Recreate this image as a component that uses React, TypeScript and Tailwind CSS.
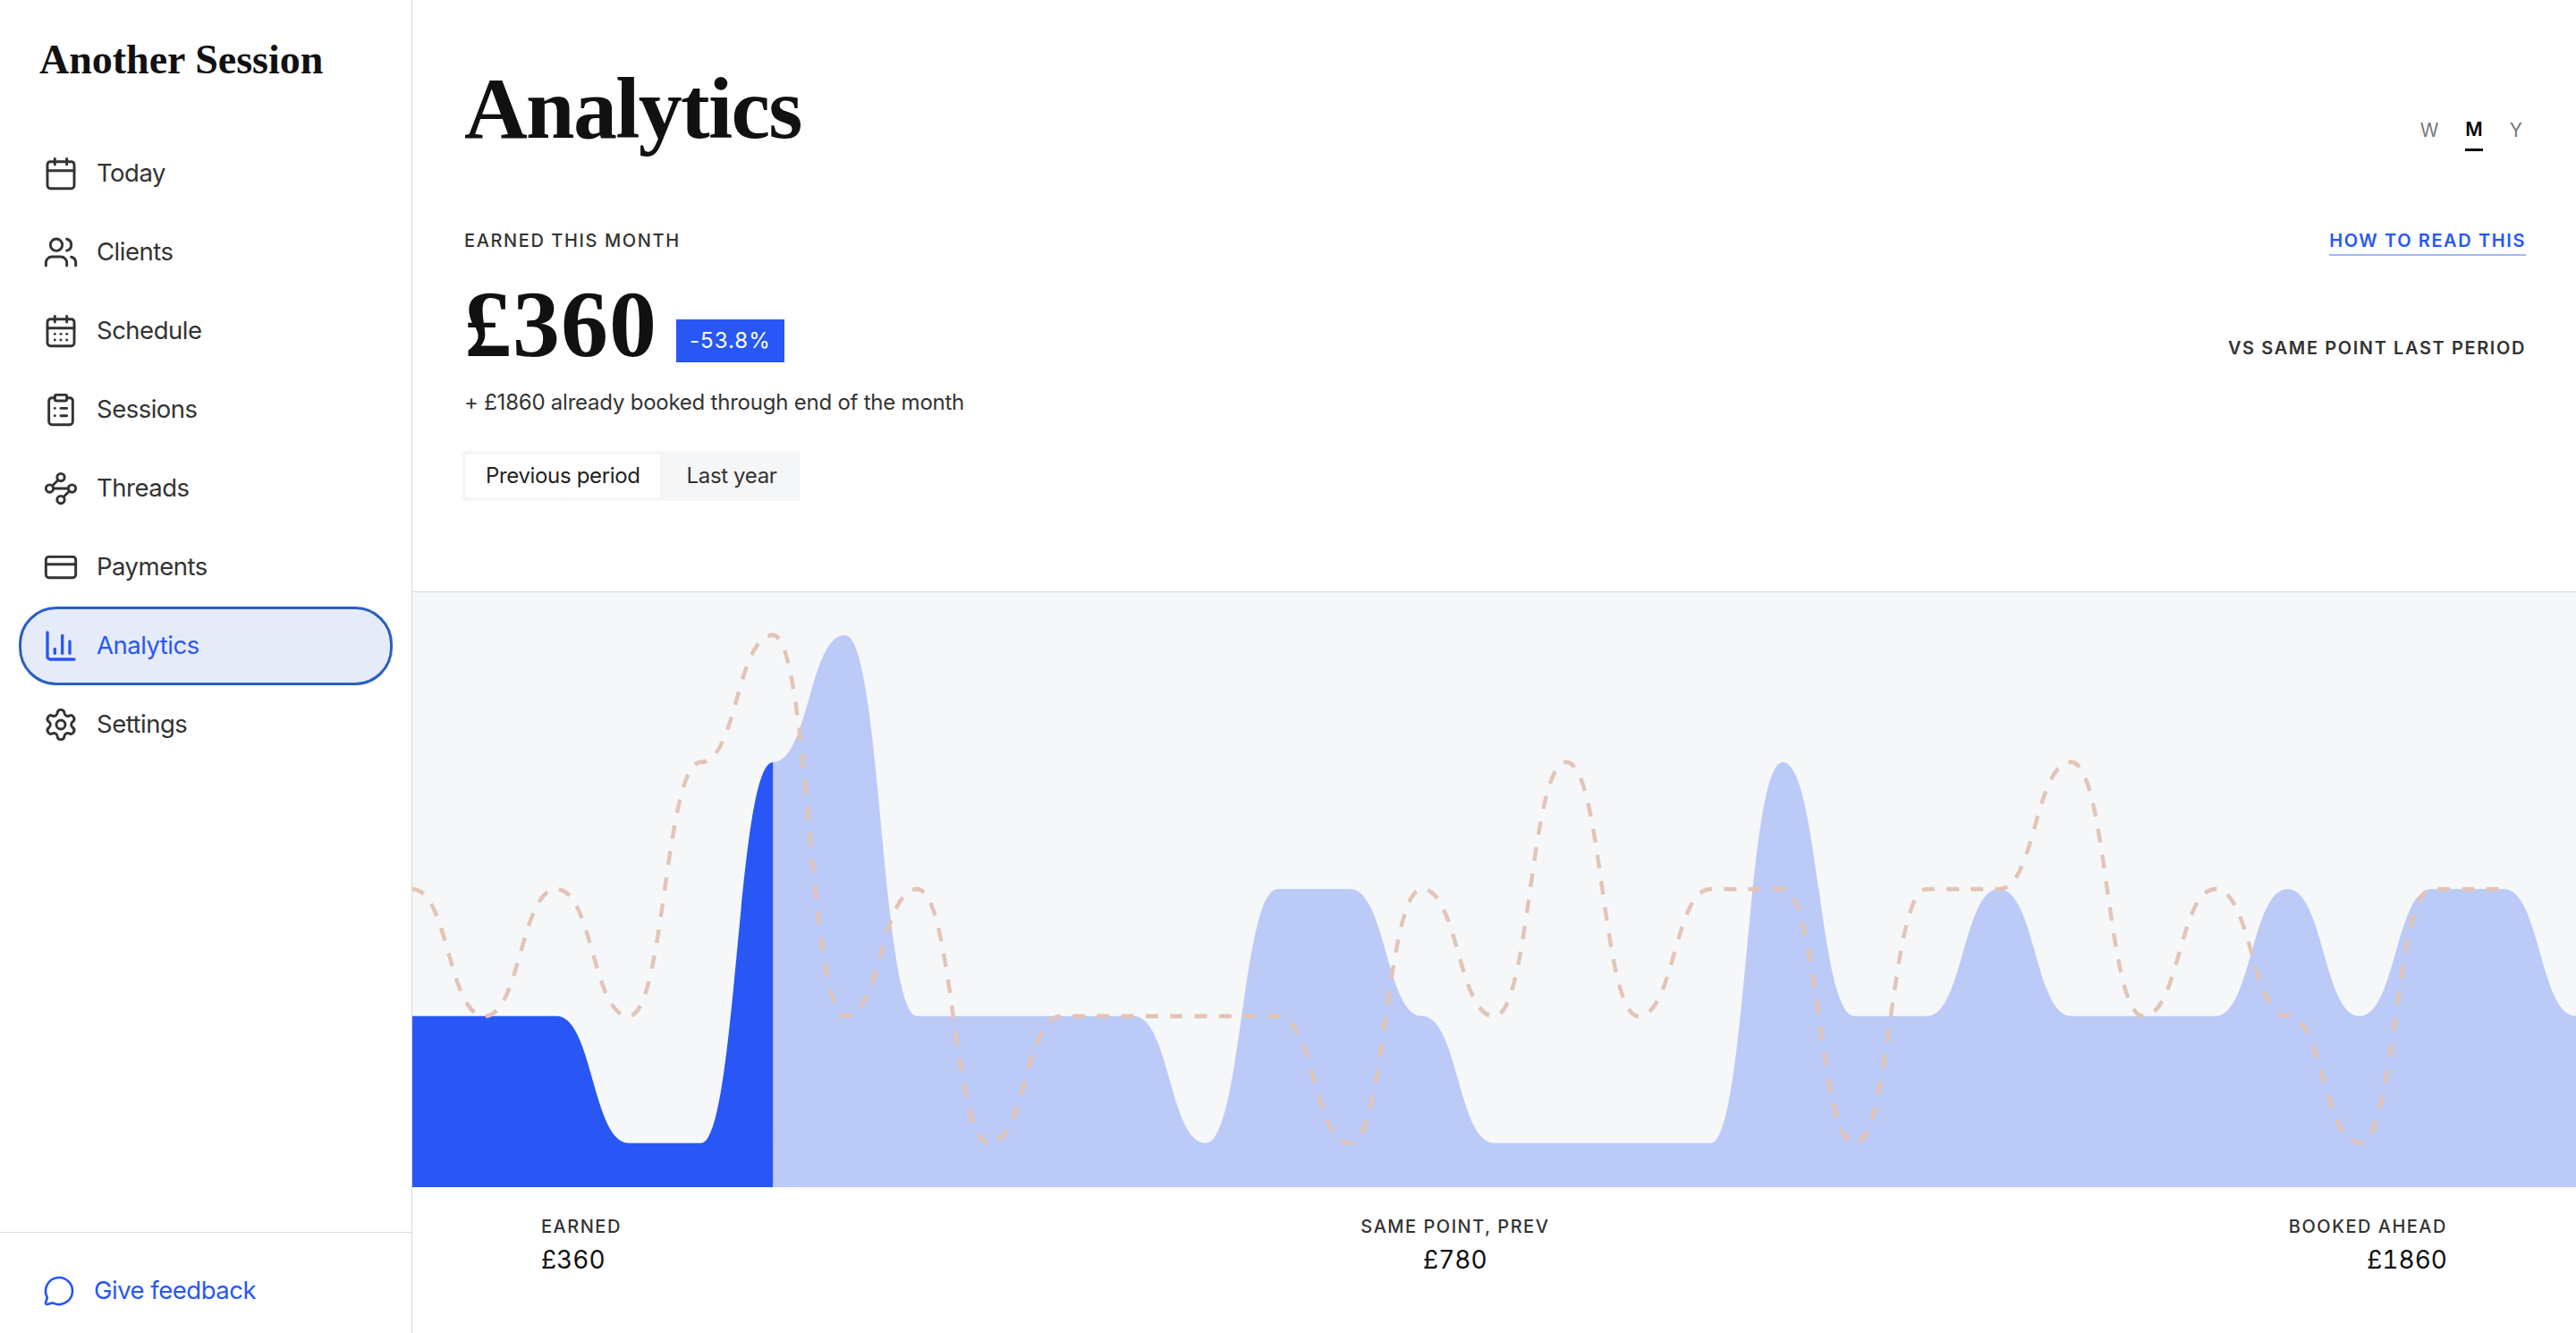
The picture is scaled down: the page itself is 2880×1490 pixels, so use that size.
import { Calendar, Users, CalendarDays, ClipboardList, Waypoints, CreditCard, ChartColumn, Settings, MessageCircle } from 'lucide-react';

const navItems = [
  { label: 'Today', icon: Calendar },
  { label: 'Clients', icon: Users },
  { label: 'Schedule', icon: CalendarDays },
  { label: 'Sessions', icon: ClipboardList },
  { label: 'Threads', icon: Waypoints },
  { label: 'Payments', icon: CreditCard },
  { label: 'Analytics', icon: ChartColumn, active: true },
  { label: 'Settings', icon: Settings },
];

// levels: 1 = lowest band ... 5 = highest
const earned = [2, 2, 2, 1, 1, 4, 5, 2, 2, 2, 2, 1, 3, 3, 2, 1, 1, 1, 1, 4, 2, 2, 3, 2, 2, 2, 3, 2, 3, 3, 2];
const previous = [3, 2, 3, 2, 4, 5, 2, 3, 1, 2, 2, 2, 2, 1, 3, 2, 4, 2, 3, 3, 1, 3, 3, 4, 2, 3, 2, 1, 3, 3];

// the viewBox is squeezed vertically, the picture's dashes run longer on the steep parts
const W = 2419;
const H = 616;
const STEP = W / 30;
const yOf = (level: number) => (616 - (level - 1) * 142) / 1.08;

function curve(values: number[], from: number) {
  let d = '';
  values.forEach((v, i) => {
    const x = (from + i) * STEP;
    const y = yOf(v);
    if (i === 0) {
      d += `M${x} ${y}`;
    } else {
      const px = (from + i - 1) * STEP;
      const py = yOf(values[i - 1]);
      const mx = (px + x) / 2;
      d += ` C${mx} ${py} ${mx} ${y} ${x} ${y}`;
    }
  });
  return d;
}

function area(values: number[], from: number) {
  const end = (from + values.length - 1) * STEP;
  return `${curve(values, from)} L${end} ${H} L${from * STEP} ${H} Z`;
}

function Chart() {
  return (
    <div className="flex-1 min-h-0 bg-[#f6f7f9]">
      <svg viewBox={`0 0 ${W} ${H}`} preserveAspectRatio="none" className="block w-full h-full">
        <path d={area(earned.slice(5), 5)} fill="#bbcaf6" />
        <path d={area(earned.slice(0, 6), 0)} fill="#2857f5" />
        <path d={curve(previous, 0)} fill="none" stroke="#e2c5b7" strokeWidth="4.4" strokeDasharray="14 13.3" />
      </svg>
    </div>
  );
}

export default function App() {
  return (
    <div className="flex h-screen bg-white text-[#333] font-['Inter',sans-serif] overflow-hidden">
      <aside className="w-[461px] shrink-0 flex flex-col border-r border-[#d8d9dc]">
        <div className="pl-[44px] pt-[42px] h-[150px] font-['Liberation_Serif',serif] font-bold text-[46px] leading-[50px] text-[#111]">
          Another Session
        </div>
        <nav className="px-[21px] flex flex-col">
          {navItems.map((item) => {
            const Icon = item.icon;
            return (
              <div
                key={item.label}
                className={
                  item.active
                    ? 'h-[88px] flex items-center gap-[20px] pl-[24px] rounded-[42px] border-[3px] border-[#2a5fbd] bg-[#e6ebfa] text-[#2857f5]'
                    : 'h-[88px] flex items-center gap-[20px] pl-[24px] border-[3px] border-transparent'
                }
              >
                <Icon size={40} strokeWidth={item.active ? 2 : 1.75} />
                <span className="text-[27.5px] tracking-[-0.5px]">{item.label}</span>
              </div>
            );
          })}
        </nav>
        <div className="mt-auto h-[113px] border-t border-[#d8d9dc] pl-[48px] pt-[18px] flex items-center gap-[21px] text-[#2857f5]">
          <MessageCircle size={36} strokeWidth={1.75} />
          <span className="text-[27.5px] tracking-[-0.5px]">Give feedback</span>
        </div>
      </aside>

      <main className="flex-1 min-w-0 flex flex-col">
        <header className="h-[662px] shrink-0 border-b border-[#d8d9dc] pl-[58px] pr-[56px]">
          <div className="flex items-end justify-between h-[170px]">
            <h1 className="font-['Liberation_Serif',serif] font-bold text-[98px] leading-[110px] text-[#111] tracking-[-1.7px] -mb-[6px]">
              Analytics
            </h1>
            <div className="flex items-start gap-[30px] text-[21px] text-[#777] pb-[1px] pr-[4px]">
              <span className="mt-[1px]">W</span>
              <span className="font-semibold text-[#000] border-b-[3px] border-black pb-[6px]">M</span>
              <span className="mt-[1px]">Y</span>
            </div>
          </div>
          <div className="flex items-start justify-between mt-[85px]">
            <span className="text-[20px] leading-[29px] font-medium tracking-[1.6px]">EARNED THIS MONTH</span>
            <span className="text-[20px] leading-[29px] font-semibold tracking-[1.6px] text-[#2857f5] border-b-2 border-[#a5b9f5]">HOW TO READ THIS</span>
          </div>
          <div className="flex items-end justify-between mt-[29px]">
            <div className="flex items-end gap-[21px]">
              <span className="font-['Liberation_Serif',serif] font-bold text-[106px] leading-[96px] tracking-[1px] text-[#111]">£360</span>
              <span className="h-[48px] mb-[6px] px-[15px] bg-[#2857f5] text-white text-[24px] tracking-[1px] flex items-center">-53.8%</span>
            </div>
            <span className="text-[20px] font-semibold tracking-[1.6px] mb-[7px]">VS SAME POINT LAST PERIOD</span>
          </div>
          <p className="text-[24px] tracking-[-0.23px] mt-[21px]">+ £1860 already booked through end of the month</p>
          <div className="flex w-fit gap-[8px] p-[4px] mt-[36px] -ml-[2px] bg-[#f5f6f8]">
            <button className="h-[48px] px-[22px] bg-white text-[24px] tracking-[-0.35px] text-[#222]">Previous period</button>
            <button className="h-[48px] px-[22px] text-[24px] tracking-[-0.35px]">Last year</button>
          </div>
        </header>

        <Chart />

        <footer className="h-[163px] shrink-0 pl-[144px] pr-[144px] pt-[29px] flex justify-between">
          <div>
            <div className="text-[20px] font-medium tracking-[1.5px]">EARNED</div>
            <div className="text-[28px] text-[#111] mt-[1px] tabular-nums">£360</div>
          </div>
          <div className="text-center">
            <div className="text-[20px] font-medium tracking-[1.5px]">SAME POINT, PREV</div>
            <div className="text-[28px] text-[#111] mt-[1px] tabular-nums">£780</div>
          </div>
          <div className="text-right">
            <div className="text-[20px] font-medium tracking-[1.5px]">BOOKED AHEAD</div>
            <div className="text-[28px] text-[#111] mt-[1px] tabular-nums">£1860</div>
          </div>
        </footer>
      </main>
    </div>
  );
}
